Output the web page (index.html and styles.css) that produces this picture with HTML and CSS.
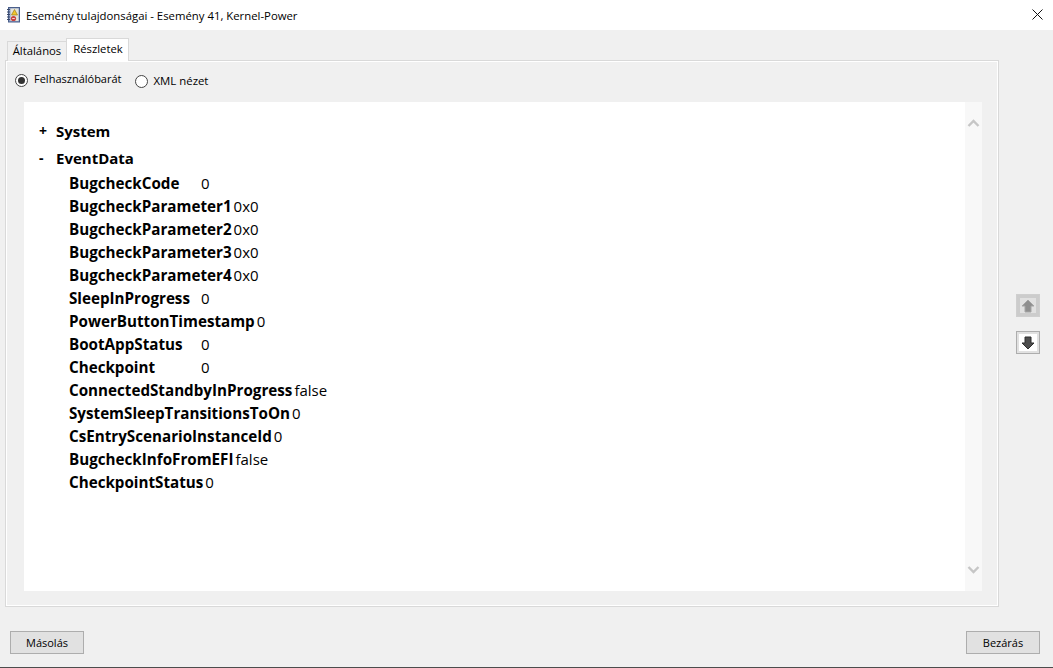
FILE: index.html
```html
<!DOCTYPE html>
<html lang="hu">
<head>
<meta charset="utf-8">
<title>Esemény tulajdonságai</title>
<link rel="stylesheet" href="styles.css">
</head>
<body>
<div class="window">
  <header class="titlebar">
    <svg class="app-icon" width="16" height="16" viewBox="0 0 16 16">
      <rect x="2.5" y="0.5" width="11" height="14.5" fill="#8a9cc4" stroke="#4a5f8a"/>
      <rect x="4.5" y="1.5" width="8" height="12.5" fill="#e4e4da"/>
      <path d="M1 2.5h3M1 5h3M1 7.5h3M1 10h3M1 12.5h3" stroke="#39486a" stroke-width="1"/>
      <path d="M8.5 2.5 11.5 8H5.5Z" fill="#f2c72c" stroke="#8f6f12" stroke-width=".6"/>
      <circle cx="7.5" cy="11.5" r="2.6" fill="#c8413f"/>
      <path d="M6.2 11.5h2.6" stroke="#f5d6d6"/>
    </svg>
    <span class="title">Esemény tulajdonságai - Esemény 41, Kernel-Power</span>
    <svg class="close" width="11" height="11" viewBox="0 0 11 11"><path d="M.5.5l10 10M10.5.5l-10 10" stroke="#111" stroke-width="1" fill="none"/></svg>
  </header>

  <main class="content">
    <div class="left">
      <div class="tabs">
        <div class="tab">Általános</div>
        <div class="tab active">Részletek</div>
      </div>
      <section class="panel">
        <div class="views">
          <label class="radio first"><span class="dot on"></span><span class="radio-label">Felhasználóbarát</span></label>
          <label class="radio second"><span class="dot"></span><span class="radio-text">XML nézet</span></label>
        </div>
        <div class="viewer">
          <div class="tree">
            <div class="node"><span class="toggle">+</span><b>System</b></div>
            <div class="node second-node"><span class="toggle">-</span><b>EventData</b></div>
            <table class="data">
              <tr><th>BugcheckCode</th><td>0</td></tr>
              <tr><th>BugcheckParameter1</th><td>0x0</td></tr>
              <tr><th>BugcheckParameter2</th><td>0x0</td></tr>
              <tr><th>BugcheckParameter3</th><td>0x0</td></tr>
              <tr><th>BugcheckParameter4</th><td>0x0</td></tr>
              <tr><th>SleepInProgress</th><td>0</td></tr>
              <tr><th>PowerButtonTimestamp</th><td>0</td></tr>
              <tr><th>BootAppStatus</th><td>0</td></tr>
              <tr><th>Checkpoint</th><td>0</td></tr>
              <tr><th>ConnectedStandbyInProgress</th><td>false</td></tr>
              <tr><th>SystemSleepTransitionsToOn</th><td>0</td></tr>
              <tr><th>CsEntryScenarioInstanceId</th><td>0</td></tr>
              <tr><th>BugcheckInfoFromEFI</th><td>false</td></tr>
              <tr><th>CheckpointStatus</th><td>0</td></tr>
            </table>
          </div>
          <div class="scrollbar">
            <svg width="13" height="8" viewBox="0 0 13 8"><path d="M1.5 7 6.5 2l5 5" stroke="#c6c6c6" stroke-width="2.4" fill="none"/></svg>
            <svg width="13" height="8" viewBox="0 0 13 8"><path d="M1.5 1l5 5 5-5" stroke="#c6c6c6" stroke-width="2.4" fill="none"/></svg>
          </div>
        </div>
      </section>
    </div>
    <aside class="side">
      <button class="nav disabled" aria-label="Fel">
        <svg width="14" height="14" viewBox="0 0 14 14"><path d="M7 1 13 7H10V13H4V7H1Z" fill="#8f8f8f" stroke="#a5a5a5"/></svg>
      </button>
      <button class="nav" aria-label="Le">
        <svg width="14" height="14" viewBox="0 0 14 14"><path d="M7 13 1 7H4V1H10V7H13Z" fill="#4d4d4d" stroke="#2f2f2f"/></svg>
      </button>
    </aside>
  </main>

  <footer class="footer">
    <button class="btn">Másolás</button>
    <button class="btn">Bezárás</button>
  </footer>
</div>
</body>
</html>
```

FILE: styles.css
```css
* { box-sizing: border-box; }
html, body { margin: 0; height: 100%; overflow: hidden; }
body { font-family: "Open Sans", "Noto Sans", sans-serif; color: #000; background: #f0f0f0; }
.window { width: 1053px; height: 668px; display: flex; flex-direction: column; border-bottom: 1px solid #4c4c4c; }

.titlebar { height: 30px; background: #fff; display: flex; align-items: center; padding: 0 10px 0 6px; flex: none; }
.app-icon { flex: none; }
.title { font-size: 11.35px; margin-left: 4px; flex: 1; white-space: nowrap; }
.close { flex: none; margin-bottom: 2px; }

.content { flex: 1; display: flex; padding: 8px 0 0 5px; min-height: 0; }
.left { width: 994px; display: flex; flex-direction: column; }
.tabs { display: flex; padding-left: 2px; align-items: flex-end; height: 23px; margin-bottom: -1px; position: relative; }
.tab { width: 60px; height: 20px; font-size: 11.3px; display: flex; align-items: center; justify-content: center; background: #f0f0f0; border: 1px solid #d9d9d9; border-bottom: 0; padding-bottom: 3px; white-space: nowrap; }
.tab.active { width: 63px; height: 23px; background: #fff; padding: 0 0 4px 1px; border-left: 1px solid #d9d9d9; margin-left: -1px; }

.panel { height: 548px; border: 1px solid #d9d9d9; box-shadow: inset 0 0 0 1px #fff; background: #f0f0f0; padding: 0 15px 15px 18px; display: flex; flex-direction: column; }
.views { height: 41px; display: flex; flex: none; font-size: 11.4px; }
.radio { display: flex; align-items: center; white-space: nowrap; height: 14px; }
.radio.first { margin-top: 12px; }
.radio.second { margin: 13px 0 0 13px; }
.radio-label { margin-bottom: 4px; font-size: 11px; }
.radio-text { margin-bottom: 2px; }
.dot { width: 13px; height: 13px; border: 1px solid #444; border-radius: 50%; background: #fff; margin-left: -9px; margin-right: 6px; display: flex; align-items: center; justify-content: center; }
.radio.second .dot { margin-left: 0; margin-right: 6px; }
.dot.on::after { content: ""; width: 7px; height: 7px; border-radius: 50%; background: #333; }

.viewer { flex: 1; display: flex; min-height: 0; width: 958px; }
.tree { flex: 1; background: #fff; padding: 17px 0 0 14px; font-size: 15px; }
.node { height: 23px; display: flex; align-items: center; }
.node.second-node { margin-top: 4px; }
.node b { font-weight: 700; }
.toggle { width: 18px; font-weight: 700; font-size: 14px; padding-left: 1px; }
.data { border-collapse: collapse; margin: 3px 0 0 31px; }
.data th { font-weight: 700; font-size: 15.2px; text-align: left; padding: 0; min-width: 130px; line-height: 23px; white-space: nowrap; }
.data td { padding: 0; margin: 0 0 2px 2px; }
.data tr { display: flex; height: 23px; align-items: center; }

.scrollbar { width: 17px; background: #f8f8f8; display: flex; flex-direction: column; justify-content: space-between; align-items: center; padding: 17px 0 17px; }

.side { flex: 1; display: flex; flex-direction: column; gap: 14px; align-items: flex-end; padding: 256px 13px 0 0; }
.nav { width: 24px; height: 23px; padding: 0; background: #fff; border: 1px solid #adadad; display: flex; align-items: center; justify-content: center; box-shadow: inset 0 0 0 2px #e1e1e1; }
.nav.disabled { background: #e1e1e1; border-color: #cfcfcf; box-shadow: inset 0 0 0 3px #cccccc; }

.footer { height: 60px; flex: none; display: flex; justify-content: space-between; padding: 24px 13px 0 10px; }
.btn { width: 74px; height: 23px; background: #e1e1e1; border: 1px solid #adadad; font: 11px "Open Sans", "Noto Sans", sans-serif; color: #000; padding: 0; }
```
